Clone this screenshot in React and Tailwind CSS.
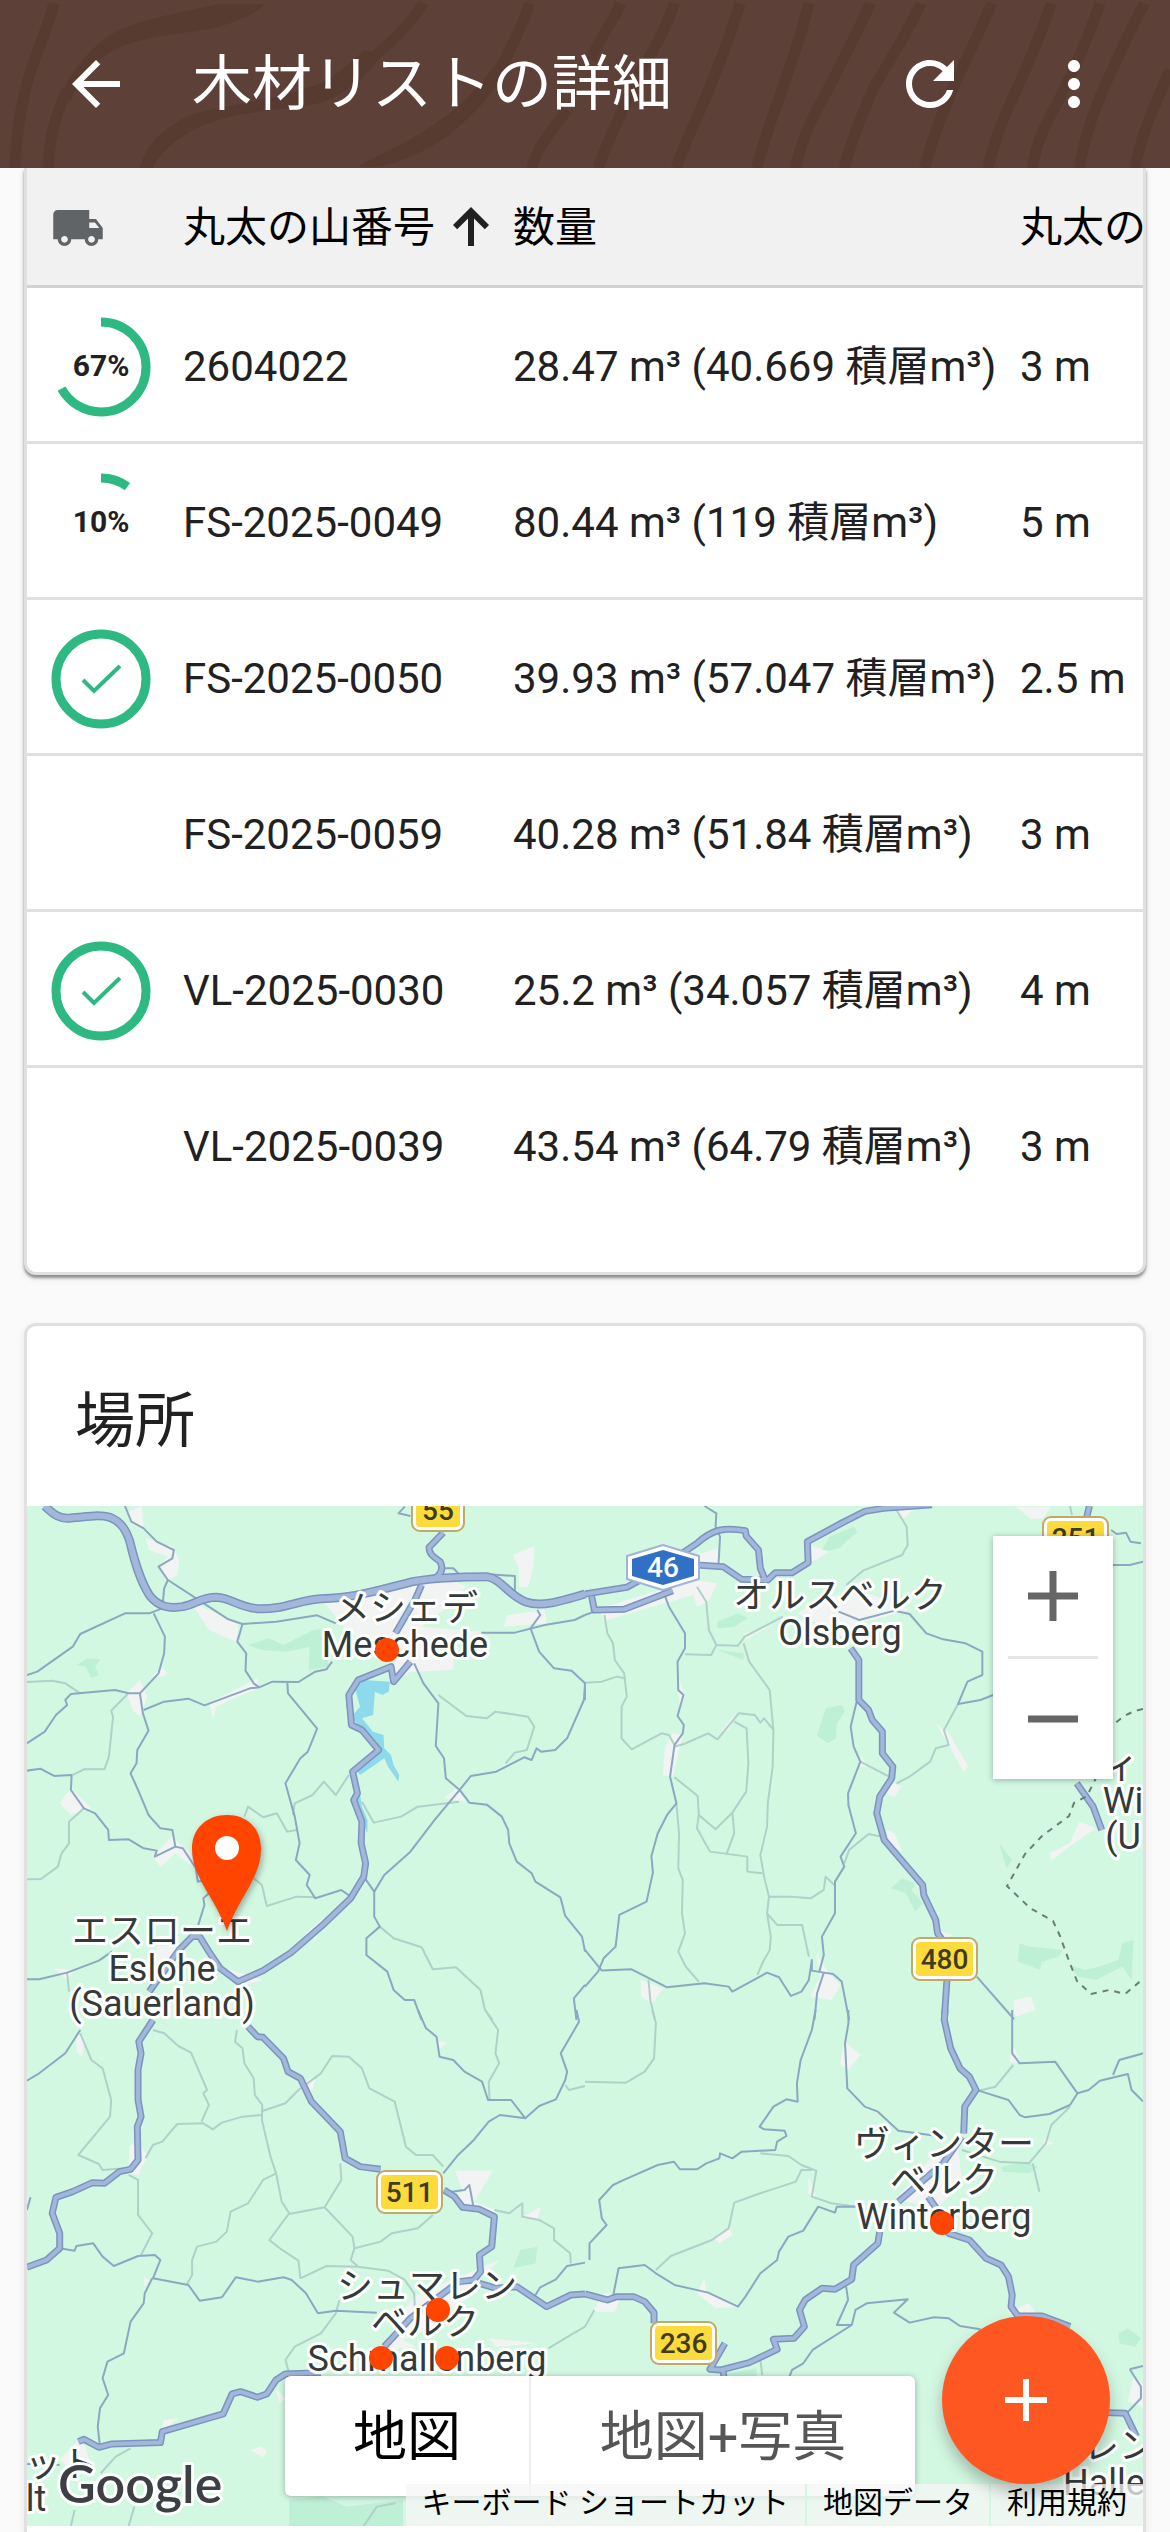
import { useState } from 'react';
import { MdAdd, MdArrowBack, MdLocalShipping, MdMoreVert, MdRefresh } from 'react-icons/md';

const ROWS = [
  { id: '2604022', progress: 67, volume: '28.47 m³ (40.669 積層m³)', length: '3 m' },
  { id: 'FS-2025-0049', progress: 10, volume: '80.44 m³ (119 積層m³)', length: '5 m' },
  { id: 'FS-2025-0050', progress: 100, volume: '39.93 m³ (57.047 積層m³)', length: '2.5 m' },
  { id: 'FS-2025-0059', progress: 0, volume: '40.28 m³ (51.84 積層m³)', length: '3 m' },
  { id: 'VL-2025-0030', progress: 100, volume: '25.2 m³ (34.057 積層m³)', length: '4 m' },
  { id: 'VL-2025-0039', progress: 0, volume: '43.54 m³ (64.79 積層m³)', length: '3 m' },
];

// wood grain, left and right half of the app bar
const GRAIN = [
  {
    x: 0,
    thin: [
      'M145 10 C120 110 85 190 70 260 C50 350 42 430 40 504',
      'M1420 10 C1400 80 1370 140 1345 200',
      'M1520 330 C1480 390 1440 440 1425 504',
      'M180 270 C150 340 135 400 128 504',
      'M1135 10 C1100 70 1060 120 990 180',
    ],
    thick: [
      'M710 12 L590 12 C440 45 330 70 270 125 C220 175 185 220 160 300 L190 300 C220 220 270 160 350 130 C430 100 520 100 590 80 C640 60 690 40 710 12 Z',
      'M980 150 C930 190 900 240 820 265 C700 310 560 320 500 350 C440 385 390 430 375 504 L410 504 C430 450 500 390 570 365 C700 320 820 330 880 300 C950 260 990 220 1020 170 Z',
      'M1330 190 C1260 300 1190 360 1110 410 C1050 450 1000 470 960 500 L1020 500 C1090 480 1170 440 1230 380 C1290 320 1330 270 1362 195 Z',
    ],
  },
  {
    x: 585,
    thin: [
      'M95 10 C75 70 40 110 15 180',
      'M240 10 C215 90 180 160 150 210 C110 310 60 420 35 504',
      'M415 10 C390 110 360 190 335 260 C300 360 265 430 245 504',
      'M600 10 C575 130 545 210 525 280 C495 370 475 440 460 504',
      'M765 10 C730 100 690 180 665 240 C620 330 580 410 565 504',
      'M900 10 C860 110 810 190 775 260 C740 350 710 430 695 504',
      'M1090 10 C1060 90 1030 160 1000 230 C960 330 930 420 910 504',
      'M1250 10 C1220 110 1190 180 1165 250 C1120 350 1095 430 1080 504',
      'M1380 10 C1350 110 1310 210 1270 300 C1230 380 1205 440 1200 504',
      'M1500 10 C1460 90 1430 170 1400 240 C1360 340 1335 430 1325 504',
      'M1568 210 C1530 310 1490 400 1475 504',
    ],
    thick: [],
  },
];

const TILES = [
  {
    x: -27,
    y: -6,
    motorway: [
      'M120 18 C145 45 160 58 190 54 C240 48 270 44 295 52 C325 66 338 90 348 125 C362 190 375 240 400 285 C425 322 455 326 490 320 C525 312 540 292 580 292 C620 294 640 322 690 326 C760 330 800 300 860 296 C960 294 1040 262 1110 244 C1170 232 1240 230 1305 230 C1345 236 1365 290 1410 306 C1450 322 1500 305 1568 282',
    ],
    major: [
      'M1188 98 L1150 142 C1150 165 1165 172 1180 185 C1190 210 1180 225 1165 235',
      'M1130 255 L1112 300 L1060 400',
      'M1100 485 L1055 545 L1048 500 L960 540 L935 585 L942 675 L970 690 L1015 750 L945 815 L958 880 L948 900 L970 965 L968 1030 L980 1090 L975 1130 L940 1195 L870 1270 L780 1358 L705 1412 L638 1445 L590 1405 L560 1355 L535 1310 L515 1310 L480 1350 L400 1475',
    ],
    road: [
      'M335 18 L352 65 L385 85 L420 125 L466 150 L462 175 L425 200 L450 240 L530 298 L612 358 L650 372 L740 365 L850 346 L900 370',
      'M450 240 L440 265 L435 325 L400 340 L335 340 L215 402 L195 440 L100 515 L72 525',
      'M412 340 L442 410 L440 460 L425 520 L375 580 L345 580 L308 570 L190 582 L175 600 L180 615 L150 645 L120 695 L72 730',
      'M375 580 L383 640 L398 692 L368 750 L366 790 L350 820 L370 870 L398 945 L430 985 L462 990 L470 1040 L415 1070 L420 1052 L385 1045 L345 1018 L292 1020 L290 990 L255 940 L225 925 L190 870 L192 825 L145 828 L108 806 L72 812',
      'M470 1040 L490 1045 L525 1105 L530 1145 L555 1140',
      'M385 630 L440 605 L505 596 L548 616 L670 565 L695 562 L730 545 L800 546 L845 515 L875 508 L890 485',
      'M650 372 L636 425 L660 460 L658 512 L680 550 L695 562',
      'M770 548 L772 580 L850 686 L825 755 L805 775 L765 850 L790 950 L803 1030 L793 1080 L830 1125 L822 1155 L845 1195 L915 1170 L940 1190',
      'M1110 490 L1135 550 L1175 610 L1168 738 L1190 775 L1195 835 L1232 870 L1258 908 L1305 914 L1345 950 L1362 990 L1365 1030 L1385 1085 L1425 1120 L1435 1145 L1502 1192 L1515 1248 L1560 1310 L1568 1355',
      'M1232 870 L1165 960 L1100 1055 L1030 1125 L1003 1175 L1003 1250 L1018 1280 L982 1315 L982 1365 L1038 1415 L1055 1470 L1085 1500 L1110 1500 L1130 1560',
      'M1232 870 L1262 828 L1330 815 L1405 772 L1425 780 L1438 745 L1450 755 L1488 750 L1520 715 L1565 600 L1568 550 L1532 512 L1485 505 L1445 455 L1422 385 L1448 345 L1440 330',
      'M1290 398 L1380 398 L1460 375 L1540 360 L1568 345',
      'M1300 222 L1380 228 L1380 280',
      'M1190 205 L1215 205 L1230 222',
      'M975 1130 L1003 1175',
      'M560 1180 L545 1195 L548 1215 L530 1280',
      'M300 1355 L265 1382 L180 1418 L105 1438 L72 1438',
      'M1568 1455 L1538 1495 L1545 1560',
      'M1085 20 L1068 40 L1100 48',
    ],
    lane: [
      'M72 546 L140 542 L175 550 L215 580',
      'M342 582 L298 632 L303 650 L292 770 L280 808 L225 808 L195 825',
      'M225 925 L185 965 L185 1030 L165 1060 L155 1100 L110 1137 L72 1138',
      'M935 825 L900 885 L868 845 L838 885 L790 910 L785 945',
      'M655 950 L665 920 L705 952 L742 940 L770 995 L795 990',
      'M970 905 L1002 968 L1075 950 L1120 920 L1230 905',
      'M1175 585 L1250 648 L1305 655 L1328 635 L1415 650 L1432 680 L1412 750 L1380 758 L1355 790',
      'M680 1135 L702 1155 L715 1218 L795 1190 L845 1192',
      'M1018 1280 L1055 1315 L1130 1342 L1160 1408 L1222 1402 L1288 1470 L1300 1530 L1320 1560',
      'M180 1420 L185 1475',
    ],
    town: [
      'M380 18 L385 90 L350 70 L345 35 Z',
      'M390 115 L465 140 L480 180 L475 225 L450 240 L425 200 L450 170 L400 150 Z',
      'M520 310 L600 350 L640 375 L632 425 L560 390 L525 330 Z',
      'M435 505 L450 520 L435 530 L405 528 Z M375 540 L395 590 L375 650 L355 630 L340 580 Z',
      'M160 910 L190 865 L245 925 L190 945 Z M690 535 L695 565 L615 600 L580 620 L572 655 L560 610 Z',
      'M870 310 L1000 280 L1210 240 L1250 260 L1200 320 L1130 380 L1290 395 L1215 430 L1215 510 L1100 515 L1050 550 L1055 480 L930 390 Z',
      'M1375 165 L1432 138 L1430 200 L1415 262 L1392 260 L1390 205 Z M1360 345 L1460 330 L1465 370 L1350 380 Z',
      'M1190 895 L1225 865 L1250 905 Z M460 1010 L510 1060 L530 1110 L470 1060 L430 1100 L410 1070 Z',
      'M865 1255 L845 1320 L820 1300 Z M560 1390 L705 1440 L640 1460 Z M145 1405 L200 1412 L180 1440 Z M420 1340 L500 1330 L440 1400 L405 1460 Z',
    ],
    water: [
      'M950 560 L975 540 L1045 545 L1042 575 L1025 585 L1005 575 L1000 645 L970 655 L1000 695 L1028 705 L1030 745 L1048 765 L1055 795 L1070 825 L1068 845 L1040 800 L1030 775 L985 810 L965 825 L955 810 L1015 750 L970 690 L942 650 L965 620 Z',
      'M958 830 L970 920 L985 960 L985 1000 L972 965 L950 905 Z',
    ],
    wood: [
      'M665 435 L720 415 L760 435 L840 390 L880 385 L880 500 L828 510 L830 440 L770 455 L700 450 Z',
      'M205 495 L235 475 L270 478 L255 500 L265 525 L245 535 L230 500 Z',
    ],
  },
  {
    x: 558,
    y: -6,
    motorway: [],
    major: [
      'M0 282 L112 262 L180 220 L300 130 C340 90 370 80 430 92 L432 108 L465 150 L470 205 L485 245',
      'M300 195 L370 200 L420 238 L490 240 L510 218 L555 218 L598 188 L596 125 L690 68 L750 34 L800 25 L930 14',
      'M18 290 L25 330 L105 328 L235 272',
      'M712 445 L734 480 L734 600 L760 630 L770 660 L797 695 L797 760 L825 800 L822 835 L790 890 L782 940 L802 1020 L905 1155 L908 1185 L940 1260 L945 1300 L970 1340 L970 1440 L963 1560',
      'M1352 18 L1345 50',
      'M1318 850 L1362 920 L1385 990',
    ],
    road: [
      'M320 18 L352 40 L350 80 L362 110 L358 190',
      'M215 290 L225 320 L268 400 L268 445 L248 485 L250 570 L264 585 L248 648 L265 675 L262 700 L240 735 L228 830 L245 910 L220 945 L195 1000 L178 1068 L182 1118 L165 1205 L92 1245 L82 1340 L50 1375 L35 1415 L0 1460',
      'M0 1350 L45 1412 L125 1408 L220 1462 L320 1450 L385 1460 L395 1475 L488 1418 L520 1432 L552 1488 L580 1475 L600 1440 L608 1380 L608 1412 L640 1418 L622 1480 L615 1560',
      'M640 1418 L665 1422 L688 1445 L708 1560',
      'M728 605 L712 680 L720 740 L738 785 L705 880 L706 915 L726 1000 L685 1070 L695 1100 L670 1145 L670 1240 L635 1310 L640 1365 L628 1415',
      'M680 335 L735 360 L830 332 L870 342 L915 400 L960 418 L1020 430 L1065 455 L1065 525 L1025 545 L1000 612 L1060 600 L1094 585',
      'M1410 195 L1460 195 L1496 185 M1410 90 L1425 102 L1450 98 L1462 125 L1490 130',
      'M1050 1430 L1150 1558 M0 560 L0 600 M0 345 L25 335',
    ],
    lane: [
      'M52 345 L60 400 L75 430 L80 480 L105 520 L112 590 L98 620 L98 715 L125 748 L205 700 L225 705 L240 735',
      'M0 548 L45 545 L85 530 L105 535',
      'M300 260 L325 305 L332 390 L352 435 L410 437 L428 410 L530 350 M268 463 L338 465 L352 435',
      'M425 430 L440 485 L495 570 L505 690 L503 800 L490 910 L488 980 L470 1065 L480 1130 L493 1190 L488 1240 L498 1310 L495 1350 L475 1390 L462 1425',
      'M240 740 L265 732 L330 700 L355 718 L412 640 L455 645 L470 668 L480 655 L505 690',
      'M400 665 L433 685 L438 790 L432 875 L395 938 L350 988 L305 945 L302 888 L240 832',
      'M305 945 L300 985 L335 1055 L435 1070 L435 1115 L475 1120 M395 938 L400 1000 L380 1060',
      'M245 910 L252 1000 L250 1105 L262 1140 L260 1240 L268 1300 L250 1355 L270 1400 L305 1445',
      'M493 1190 L550 1190 L605 1195 L640 1170 L645 1130 L668 1155 M488 1240 L515 1275 L582 1275 L600 1370',
      'M835 30 L862 80 L865 135 L850 165 L745 212 L700 255 M1300 18 L1305 45',
      'M1000 612 L962 690 L975 735 L940 745 L925 785 L870 830 L835 850 M738 785 L815 830',
      'M695 1090 L708 1050 L760 1002 L795 1010 M170 1440 L175 1500 L188 1560',
    ],
    town: [
      'M1155 20 L1248 20 L1228 55 L1195 58 Z M835 20 L888 20 L850 60 Z M600 135 L655 155 L610 185 Z',
      'M40 325 L290 240 L355 250 L330 305 L300 320 L290 285 L50 362 Z M300 165 L355 145 L365 190 L310 190 Z',
      'M570 340 L640 290 L760 280 L870 330 L735 370 L690 410 Z M430 400 L500 375 L430 420 Z',
      'M235 700 L262 705 L235 830 L208 825 L215 740 Z M245 510 L268 590 L255 630 Z',
      'M940 670 L975 700 L1028 800 L1015 815 L980 745 Z M825 850 L848 858 L830 892 L808 880 Z',
      'M808 990 L830 1000 L850 1055 L815 1030 Z M620 1360 L650 1415 L685 1455 L660 1500 L605 1490 L630 1430 Z',
      'M1245 1060 L1300 1030 L1325 965 L1370 985 L1310 1030 L1250 1082 Z M1150 1500 L1195 1490 L1208 1530 L1150 1540 Z M150 1440 L210 1465 L180 1510 L150 1490 Z',
      'M405 635 L385 690 L365 695 Z M740 765 L755 800 L735 800 Z M940 1290 L985 1305 L950 1320 Z',
    ],
    water: [],
    wood: [
      'M645 625 L690 615 L696 635 L675 670 L672 715 L652 730 L622 708 Z',
      'M630 160 L655 110 L720 80 L730 95 L680 145 Z',
      'M355 365 L410 340 L435 355 L400 380 L355 385 Z M355 450 L425 460 L425 480 Z',
      'M820 1165 L850 1135 L885 1150 L875 1170 L905 1210 L885 1235 L860 1180 Z',
      'M1165 1330 L1190 1340 L1280 1350 L1270 1370 L1225 1385 L1220 1410 L1160 1385 Z',
      'M1300 1395 L1340 1410 L1380 1400 L1430 1380 L1440 1330 L1470 1320 L1465 1440 L1440 1400 L1370 1440 L1320 1430 Z',
      'M1110 1030 L1145 1080 L1130 1105 Z',
    ],
  },
  {
    x: -27,
    y: 504,
    motorway: [],
    major: [
      'M410 30 L372 95 L378 130 L370 180 L370 270 L378 320 L368 350 L370 450 L350 478 L320 485 L280 520 L248 518 L195 545 L150 562 L140 610 L160 670 L160 715 L125 750 L72 772',
      'M665 50 L690 80 L705 82 L760 145 L772 185 L805 205 L835 275 L912 365 L925 445 L965 470 L1020 478',
      'M1190 540 L1218 560 L1240 592 L1285 598 L1325 620 L1318 710 L1285 735 L1288 785 L1270 810 L1230 815 L1100 925 L1030 1010',
      'M1285 820 L1330 835 L1385 830 L1465 890 L1530 855 L1568 852',
      'M860 1088 L765 1092 L740 1110 L715 1152 L690 1162 L645 1145 L622 1152 L598 1212 L435 1265 L430 1298 L300 1302 L265 1312 L225 1288 L210 1295',
    ],
    road: [
      'M215 60 L175 130 L105 190 L72 212 M72 600 L82 562',
      'M160 715 L200 722 L205 708 L250 700 L275 740 L305 768 L370 738 L415 735 L430 750 L410 805 L505 825 L535 872 L595 862 L632 802 L690 815 L760 802 L782 810 L820 850 L852 910 L900 902 L1010 908',
      'M408 805 L388 850 L385 880 L350 935 L332 1030 L288 1055 L275 1105 L290 1155 L268 1195 L262 1250 L268 1310',
      'M1120 0 L1142 55 L1170 80 L1178 140 L1215 150 L1245 185 L1292 215 L1308 270 L1370 270 L1408 325 L1340 315 L1310 335 L1270 390 L1228 435 L1188 490',
      'M1408 325 L1445 288 L1490 268 L1515 210 L1520 185 L1503 130 L1552 35 L1545 0',
      'M1435 855 L1448 832 L1490 808 L1520 768 L1568 758 M1210 545 L1245 540 L1258 525 L1268 585',
      'M72 1362 L110 1362 L160 1365',
    ],
    lane: [
      'M215 70 L245 150 L275 175 L298 270 L295 320 L210 435 L265 462 L275 480 L335 475',
      'M410 60 L440 70 L478 108 L512 128 L555 240 L545 250 L560 285 L540 335 M390 445 L410 405 L435 395 L475 342 L545 340 L570 358 L595 338 L650 320 L702 315',
      'M635 60 L630 95 L650 115 L655 160 L680 205 L683 255 L703 285 L702 330 L725 440 L740 490 L755 575 L775 610 L722 690 L750 715 L800 752 L805 805',
      'M703 303 L765 280 L800 240 L860 190 L890 138 L935 140 L970 175 L990 235 L1058 275 L1088 410 L1115 435 L1160 435 L1188 470',
      'M740 490 L705 510 L665 580 L618 605 L608 665 L580 695 L528 710 L515 750 L515 795 L500 825',
      'M775 612 L870 592 L915 510 L912 460 M870 592 L945 680 L950 715 L1020 695 L1050 670 L1120 655 L1160 615',
      'M950 715 L940 750 L960 770 L875 768 L805 805 M960 770 L1040 782 L1085 810 L1110 850 L1112 900',
      'M345 495 L370 510 L370 615 L408 670 L378 735 M910 870 L900 910 L860 970 L790 1010 L765 1050 L775 1090',
      'M1300 0 L1335 60 L1328 130 L1338 160 L1310 215 L1312 268 M1515 225 L1525 240 L1568 228',
      'M1325 600 L1365 610 L1400 580 L1400 620 L1445 630 L1485 655 L1485 690 L1528 730 L1530 760 M1568 950 L1530 975 L1470 1015 M350 1315 L310 1340 L270 1390 M200 1500 L190 1548 M360 1490 L345 1548 M1060 1480 L1010 1490 L975 1548',
    ],
    town: [
      'M1220 482 L1320 482 L1290 540 L1270 575 L1330 600 L1310 620 L1250 600 L1200 560 L1240 545 Z M1395 625 L1450 590 L1440 630 Z',
      'M830 205 L845 210 L835 245 L800 240 Z M348 405 L375 400 L395 440 L370 495 L345 490 Z M205 70 L225 80 L220 140 L205 125 Z',
      'M1170 95 L1198 95 L1180 115 Z M1340 750 L1290 800 L1260 860 L1140 960 L1080 990 L1115 1010 L1030 1020 L1060 940 L1110 860 L1230 800 Z M1310 985 L1440 1000 L1330 1010 Z',
      'M670 1320 L700 1310 L715 1325 L705 1342 Z M440 1230 L480 1225 L430 1265 Z M740 1140 L765 1165 L750 1180 Z M385 800 L400 810 L388 830 Z M160 1350 L210 1290 L230 1310 L250 1400 L190 1380 Z',
    ],
    water: [],
    wood: ['M775 1470 L865 1460 L930 1490 L1080 1470 L1080 1548 L775 1548 Z', 'M1375 775 L1395 720 L1440 710 L1435 760 Z'],
  },
  {
    x: 558,
    y: 504,
    motorway: [],
    major: [
      'M965 0 L963 30 L980 115 L1005 175 L1030 200 L1048 240 L1018 290 L1015 370',
      'M0 852 L60 870 L85 860 L130 860 L160 875 L185 908 L185 940',
      'M375 1000 L335 1078 L365 1080 L440 1058 L515 1018 L505 988 L560 985 L588 950 L575 900 L590 870 L635 835 L670 838 L715 808 L720 765 L785 700 L790 665',
      'M370 1078 L372 1100 M1010 380 L960 460 L840 575 M920 560 L945 600 L975 670 L1030 690 L1075 745 L1115 765 L1135 800 L1145 855 L1142 890 L1160 918 L1225 918 L1300 950',
      'M1400 1208 L1448 1210 L1478 1280',
    ],
    road: [
      'M618 0 L608 60 L578 150 L568 220 L570 275 L540 268 L505 290 L468 350 L480 358 L535 362 L540 378 L515 395 L510 420 L420 425 L395 445 L362 430 L360 445 L325 460 L300 478 L255 478 L238 455 L195 465 L100 512 L75 525 L38 570 L45 625 L58 645 L12 700 L12 750',
      'M706 0 L706 40 L697 100 L703 235 L750 290 L785 305 L840 362 L960 380',
      'M75 860 L90 775 L160 765 L190 790 L240 825 L330 848 L410 890 L430 860 L470 790 L515 750 L520 725 L545 680 L585 662 L625 590 L670 608 L675 590 L735 590',
      'M1145 0 L1145 130 L1165 160 L1260 155 L1320 250 L1300 285 L1245 312 L1180 322 L1165 315 L1135 270 L1055 242',
      'M1320 250 L1350 240 L1380 212 L1455 192 L1465 240 L1496 275 M1415 195 L1432 150 L1496 130',
      'M700 830 L705 870 L675 945 L715 945 L725 900 L755 880 L865 868 L828 908 L870 938 L935 922 L975 925 L1005 948 L1060 958 M715 945 L610 1020 L585 1060 L555 1080 L548 1100',
      'M1460 1078 L1490 1130 L1490 1165 L1452 1210 M1460 1078 L1496 1068',
    ],
    lane: [
      'M180 0 L190 40 L185 145 L160 185 L110 218 L0 215',
      'M470 430 L545 438 L580 465 L620 482 L608 560 L660 580 L730 590 M608 480 L580 480 L565 515 L470 550 L400 578 L385 655 L340 690 L230 738 L190 780',
      'M1148 165 L1100 230 L1055 242 M1300 290 L1250 345 L1235 400 L1190 460 L1110 455 L1010 420 M470 1050 L475 1095 M25 900 L0 950 M1200 460 L1218 545',
    ],
    town: [
      'M697 95 L738 135 L705 180 L683 160 Z M1150 0 L1205 0 L1155 20 Z M1145 100 L1168 160 L1138 155 Z',
      'M50 850 L100 850 L80 905 L20 905 Z M320 805 L325 845 L410 890 L350 895 L300 850 Z M390 655 L395 675 L360 700 L345 685 Z',
      'M940 430 L1000 410 L1010 520 L940 600 L880 580 L830 570 Z M1130 910 L1190 880 L1215 920 Z M1470 1100 L1496 1120 L1496 1190 L1455 1175 Z M1230 385 L1255 400 L1228 410 Z M600 500 L620 565 L598 550 Z',
    ],
    water: [],
    wood: [
      'M1115 470 L1180 455 L1215 470 L1190 490 L1120 485 Z M1430 970 L1455 955 L1490 985 L1475 1010 L1432 1000 Z',
      'M380 1090 L460 1075 L460 1100 L380 1100 Z',
    ],
  },
];

const LAYERS = [
  { key: 'wood', fill: '#bdf0d4', stroke: 'none', width: 0 },
  { key: 'town', fill: '#f2f4f3', stroke: 'none', width: 0 },
  { key: 'water', fill: '#8fd9ec', stroke: 'none', width: 0 },
  { key: 'lane', fill: 'none', stroke: '#b0d0c8', width: 2 },
  { key: 'road', fill: 'none', stroke: '#8ba8c0', width: 2 },
  { key: 'major', fill: 'none', stroke: '#7b93be', width: 7 },
  { key: 'motorway', fill: 'none', stroke: '#7b93be', width: 9 },
  { key: 'major', fill: 'none', stroke: '#a2b7da', width: 4 },
  { key: 'motorway', fill: 'none', stroke: '#a2b7da', width: 6 },
];

const LABELS = [
  { x: 379, y: 115, text: 'メシェデ' },
  { x: 378, y: 151, text: 'Meschede' },
  { x: 813, y: 102, text: 'オルスベルク' },
  { x: 813, y: 139, text: 'Olsberg' },
  { x: 135, y: 438, text: 'エスローエ' },
  { x: 135, y: 475, text: 'Eslohe' },
  { x: 135, y: 510, text: '(Sauerland)' },
  { x: 917, y: 651, text: 'ヴィンター' },
  { x: 917, y: 687, text: 'ベルク' },
  { x: 917, y: 723, text: 'Winterberg' },
  { x: 400, y: 793, text: 'シュマレン' },
  { x: 398, y: 829, text: 'ベルク' },
  { x: 400, y: 865, text: 'Schmallenberg' },
  { x: 1094, y: 272, text: 'ィ' },
  { x: 1096, y: 307, text: 'Wi' },
  { x: 1096, y: 343, text: '(U' },
  { x: 34, y: 971, text: 'ット' },
  { x: 9, y: 1005, text: 'lt' },
  { x: 1092, y: 953, text: 'レン' },
  { x: 1077, y: 989, text: 'Halle' },
];

const SHIELDS = [
  { x: 384, y: -18, width: 54, text: '55' },
  { x: 1015, y: 10, width: 67, text: '251' },
  { x: 884, y: 431, width: 67, text: '480' },
  { x: 349, y: 664, width: 67, text: '511' },
  { x: 623, y: 815, width: 67, text: '236' },
];

const PILES = [
  [360, 144],
  [915, 717],
  [411, 804],
  [354, 852],
  [420, 852],
];

const ProgressRing = ({ value }) => {
  if (!value) return null;
  const done = value === 100;

  return (
    <svg viewBox="0 0 100 100" className="size-[100px]" role="img" aria-label={`${value}%`}>
      <circle
        cx="50"
        cy="50"
        r="45"
        fill="none"
        stroke="#2eb882"
        strokeWidth="9"
        pathLength="100"
        strokeDasharray={done ? undefined : `${value} 100`}
        transform="rotate(-90 50 50)"
      />
      {done ? (
        <path d="M32 51 L43 62 L69 37" fill="none" stroke="#2eb882" strokeWidth="4" />
      ) : (
        <text x="50" y="59" textAnchor="middle" fill="#212121" className="text-[30px] font-bold">
          {value}%
        </text>
      )}
    </svg>
  );
};

const AppBar = () => (
  <header className="relative flex h-[168px] items-center bg-[#5d4138] px-6 text-white">
    <svg viewBox="0 0 1170 168" preserveAspectRatio="none" className="absolute inset-0 h-full w-full" aria-hidden="true">
      {GRAIN.map(half => (
        <g key={half.x} transform={`translate(${half.x} 0) scale(0.3731 0.3333)`}>
          {half.thick.map(d => <path key={d} d={d} fill="#573b31" />)}
          {half.thin.map(d => <path key={d} d={d} fill="none" stroke="#573b31" strokeWidth="30" />)}
        </g>
      ))}
    </svg>
    <button type="button" aria-label="戻る" className="relative flex size-[144px] items-center justify-center">
      <MdArrowBack className="size-[72px]" />
    </button>
    <h1 className="relative ml-6 flex-1 pt-0.5 text-[60px] leading-none">木材リストの詳細</h1>
    <button type="button" aria-label="更新" className="relative flex size-[144px] items-center justify-center">
      <MdRefresh className="size-[72px]" />
    </button>
    <button type="button" aria-label="メニュー" className="relative flex size-[144px] items-center justify-center">
      <MdMoreVert className="size-[72px]" />
    </button>
  </header>
);

const PileTable = () => (
  <section className="overflow-hidden rounded-b-xl border-x-3 border-b-3 border-[#e0e0e0] bg-white pb-12 shadow-[0_3px_3px_rgba(0,0,0,0.4),0_3px_9px_rgba(0,0,0,0.08)]">
    <table className="w-full table-fixed border-separate border-spacing-0 whitespace-nowrap text-left text-[42px] leading-[48px]">
      <colgroup>
        <col className="w-[156px]" />
        <col className="w-[330px]" />
        <col className="w-[507px]" />
        <col />
      </colgroup>
      <thead>
        <tr className="h-[120px] bg-[#f1f1f1] text-black *:border-b-3 *:border-[#d2d2d2] *:pt-[3px] *:font-normal">
          <th className="pl-6">
            <MdLocalShipping className="size-[54px] text-[#616466]" aria-label="輸送" />
          </th>
          <th>
            <button type="button" className="flex items-center">
              丸太の山番号
              <svg viewBox="0 -960 960 960" className="size-[72px] shrink-0" fill="#212121" aria-hidden="true">
                <path d="M440-240v-368L296-464l-56-56 240-240 240 240-56 56-144-144v368h-80Z" />
              </svg>
            </button>
          </th>
          <th>数量</th>
          <th>丸太の</th>
        </tr>
      </thead>
      <tbody className="text-[#212121]">
        {ROWS.map(row => (
          <tr key={row.id} className="h-[156px] *:border-b-3 *:border-[#e0e0e0] *:pt-1 last:*:border-white">
            <td className="pl-6">
              <ProgressRing value={row.progress} />
            </td>
            <td>{row.id}</td>
            <td>{row.volume}</td>
            <td>{row.length}</td>
          </tr>
        ))}
      </tbody>
    </table>
  </section>
);

const MapCanvas = () => (
  <svg viewBox="0 0 1116 1020" preserveAspectRatio="xMidYMid slice" className="h-full w-full bg-[#d3f8e2]">
    {LAYERS.map((layer, i) => (
      <g key={i} fill={layer.fill} stroke={layer.stroke} strokeWidth={layer.width} strokeLinejoin="round">
        {TILES.map(tile => (
          <g key={`${tile.x}/${tile.y}`} transform={`translate(${tile.x} ${tile.y}) scale(0.3731 0.3333)`}>
            {tile[layer.key].map(d => <path key={d} d={d} vectorEffect="non-scaling-stroke" />)}
          </g>
        ))}
      </g>
    ))}

    {/* state border */}
    <path
      d="M1116 203 C1100 206 1092 214 1086 219 M1070 270 L1060 290 L1047 297 L1042 310 L1015 330 L998 348 L980 380 L1003 402 L1026 415 L1033 430 L1042 455 L1050 475 L1064 488 L1082 484 L1098 488 L1116 473"
      fill="none"
      stroke="#6c7d72"
      strokeWidth="2"
      strokeDasharray="6 6"
    />

    {SHIELDS.map(s => (
      <g key={s.text}>
        <rect x={s.x + 1} y={s.y + 1} width={s.width - 2} height="42" rx="8" fill="#fff" stroke="#c2a869" strokeWidth="2" />
        <rect x={s.x + 5} y={s.y + 5} width={s.width - 10} height="34" rx="4" fill="#fcdb3c" />
        <text x={s.x + s.width / 2} y={s.y + 32} textAnchor="middle" fill="#3f3a22" className="text-[28px] font-medium">
          {s.text}
        </text>
      </g>
    ))}
    <path d="M600 50 L636 39 L672 50 V73 L636 84 L600 73 Z" fill="#fff" stroke="#9fb4d8" strokeWidth="2" strokeLinejoin="round" />
    <path d="M605 53 L636 44 L667 53 V70 L636 79 L605 70 Z" fill="#3071c6" />
    <text x="636" y="71" textAnchor="middle" fill="#fff" className="text-[28px] font-medium">46</text>

    <g fill="#333b38" stroke="#fff" strokeWidth="6" strokeLinejoin="round" className="[paint-order:stroke]">
      {LABELS.map(l => (
        <text key={`${l.x}-${l.y}`} x={l.x} y={l.y} textAnchor="middle" className="text-[36px]">
          {l.text}
        </text>
      ))}
      <text x="31" y="997" fill="#3c4043" className="font-[Lato] text-[52px] font-semibold">Google</text>
    </g>

    {PILES.map(([cx, cy]) => <circle key={`${cx}-${cy}`} cx={cx} cy={cy} r="12" fill="#ff4500" />)}
    <g className="drop-shadow-[2px_3px_3px_rgba(0,0,0,0.3)]">
      <path d="M165 343 C165 322 180 309 200 309 C220 309 234 322 234 343 C234 371 213 390 200 425 C187 390 165 371 165 343 Z" fill="#ff4500" />
      <circle cx="200" cy="342" r="12" fill="#fff" />
    </g>
  </svg>
);

const MapTypeSwitch = () => {
  const [type, setType] = useState('map');

  return (
    <div className="absolute bottom-[30px] left-[258px] flex h-[120px] overflow-hidden rounded-md bg-white text-[54px] leading-none shadow-[0_1px_6px_rgba(0,0,0,0.3)]">
      <button
        type="button"
        aria-pressed={type === 'map'}
        onClick={() => setType('map')}
        className="w-[246px] border-r-2 border-[#ededed] pt-1 text-[#565656] aria-pressed:text-black"
      >
        地図
      </button>
      <button
        type="button"
        aria-pressed={type === 'hybrid'}
        onClick={() => setType('hybrid')}
        className="w-[384px] pt-1 text-[#565656] aria-pressed:text-black"
      >
        地図+写真
      </button>
    </div>
  );
};

const LocationCard = () => (
  <section className="mt-12 overflow-hidden rounded-t-xl border-x-3 border-t-3 border-[#e0e0e0] bg-white pb-1.5 shadow-[0_3px_9px_rgba(0,0,0,0.08)]">
    <h2 className="flex h-[180px] items-center px-12 pt-3 text-[60px] leading-none text-[#212121]">場所</h2>
    <div className="relative h-[1020px] overflow-hidden">
      <MapCanvas />
      <div className="absolute right-[30px] top-[30px] flex w-[120px] flex-col bg-white shadow-[0_1px_6px_rgba(0,0,0,0.3)]">
        <button type="button" aria-label="ズームイン" className="flex h-[120px] items-center justify-center">
          <svg viewBox="0 0 50 50" className="size-[50px]" stroke="#666" strokeWidth="7">
            <path d="M0 25 H50 M25 0 V50" />
          </svg>
        </button>
        <hr className="mx-[15px] border-t-3 border-[#e6e6e6]" />
        <button type="button" aria-label="ズームアウト" className="flex h-[120px] items-center justify-center">
          <svg viewBox="0 0 50 50" className="size-[50px]" stroke="#666" strokeWidth="7">
            <path d="M0 25 H50" />
          </svg>
        </button>
      </div>
      <MapTypeSwitch />
      <div className="absolute bottom-0 right-0 flex h-[42px] items-stretch divide-x-2 divide-[#d3f8e2] whitespace-nowrap bg-[#f5f5f5]/75 text-[30px] leading-[38px] text-black">
        <button type="button" className="px-4 pb-1">キーボード ショートカット</button>
        <button type="button" className="px-4 pb-1">地図データ</button>
        <a href="#terms" className="px-4 pb-1">利用規約</a>
      </div>
    </div>
  </section>
);

const App = () => {
  return (
    <div lang="ja" className="min-h-screen bg-[#fafafa] font-[Roboto,'Noto_Sans_CJK_JP',sans-serif]">
      <AppBar />
      <main className="px-6">
        <PileTable />
        <LocationCard />
      </main>
      <button
        type="button"
        aria-label="追加"
        className="fixed bottom-12 right-[60px] flex size-[168px] items-center justify-center rounded-full bg-[#ff5722] text-white shadow-[0_9px_15px_rgba(0,0,0,0.25)]"
      >
        <MdAdd className="size-[72px]" />
      </button>
    </div>
  );
};

export default App;
